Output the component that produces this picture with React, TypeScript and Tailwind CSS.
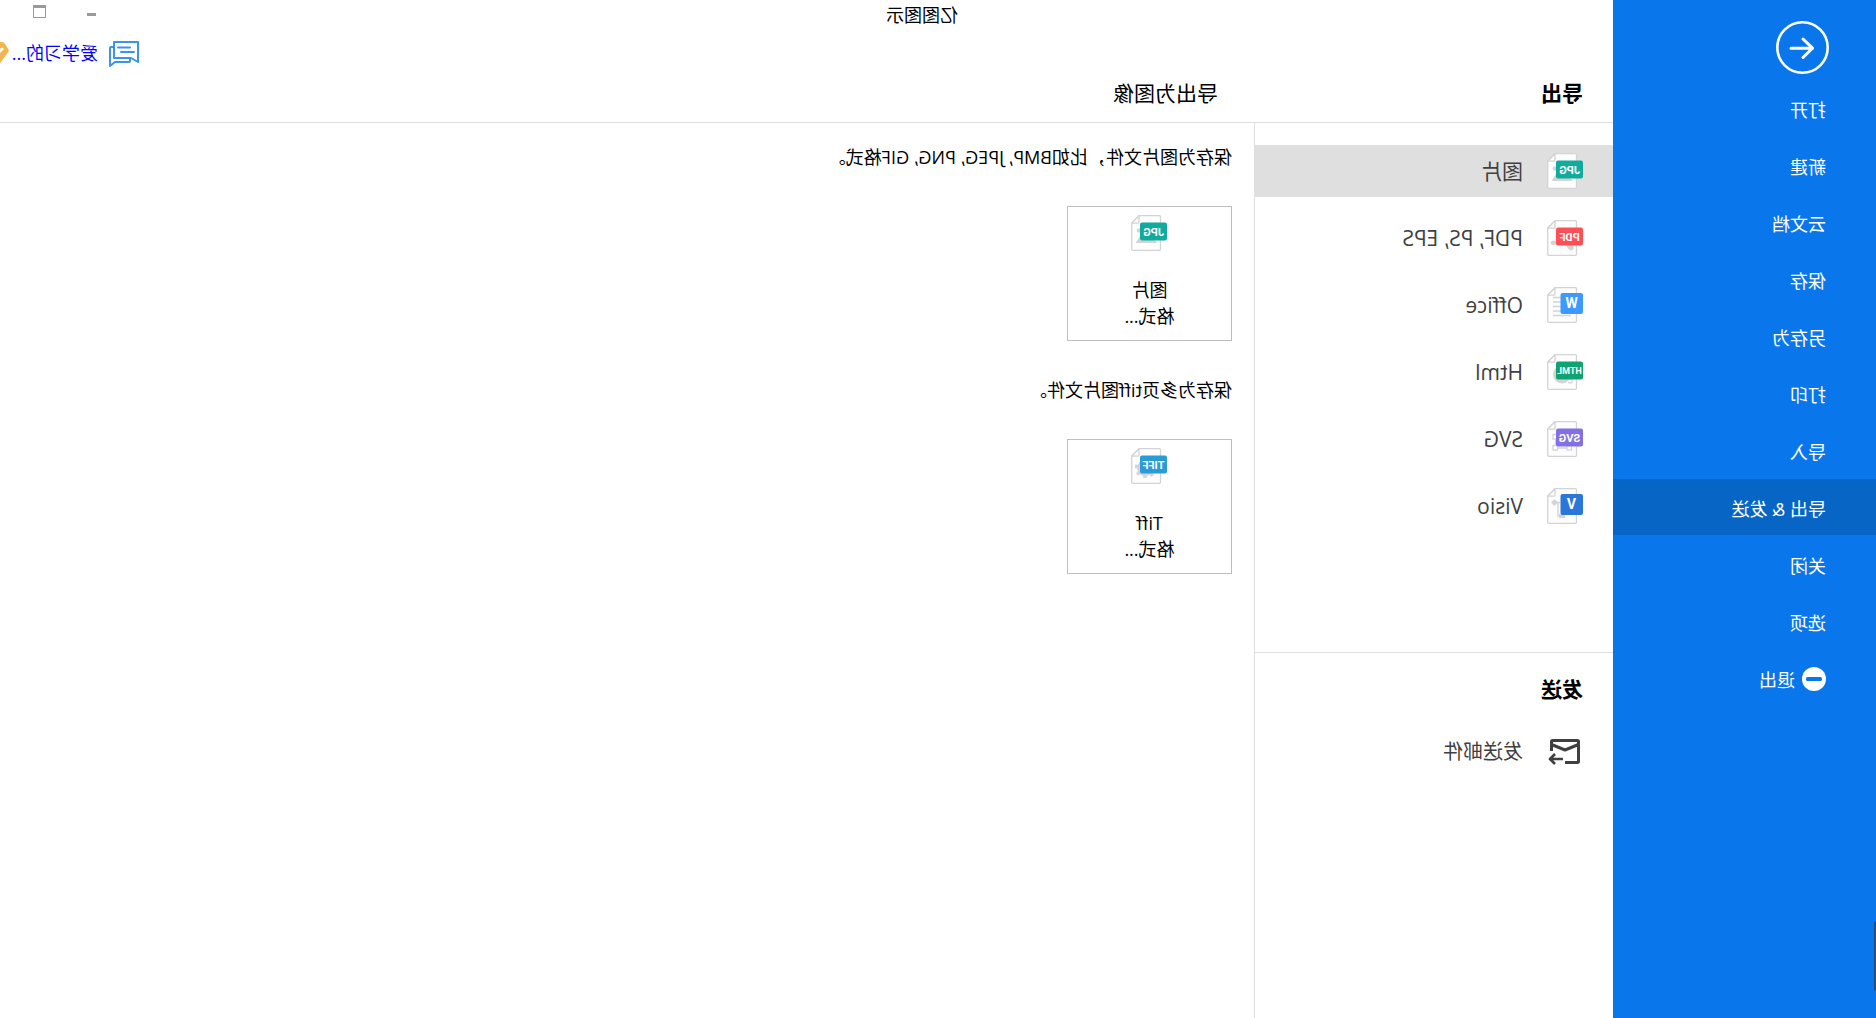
import React from 'react';
import clsx from 'clsx';

type FileKind = 'jpg' | 'pdf' | 'word' | 'html' | 'svg' | 'visio' | 'tiff';

const badges: Record<FileKind, { label: string; color: string; size: number; small?: boolean }> = {
  jpg: { label: 'JPG', color: '#11ab9e', size: 11 },
  pdf: { label: 'PDF', color: '#ff4f56', size: 11 },
  word: { label: 'W', color: '#3d99ff', size: 14, small: true },
  html: { label: 'HTML', color: '#11a274', size: 9 },
  svg: { label: 'SVG', color: '#8270e4', size: 11 },
  visio: { label: 'V', color: '#2b76d9', size: 14, small: true },
  tiff: { label: 'TIFF', color: '#2b9bd6', size: 11 },
};

const glyphs: Record<FileKind, React.ReactNode> = {
  jpg: (
    <g fill="#d4d4d4">
      <circle cx="28" cy="15.5" r="2.3" />
      <path d="M10 28l8-11 6 7 3-3 4.500 7z" />
    </g>
  ),
  pdf: (
    <g fill="#d4d4d4">
      <ellipse cx="29" cy="22.700" rx="3.300" ry="2.200" />
      <path d="M18 24l-4 5.500q-2 2-4 0-1.500-2 .5-4z" />
    </g>
  ),
  word: <path d="M12 10.500h18M12 15h18M12 19.500h18M12 24h18M12 28.500h18" stroke="#d4d4d4" strokeWidth="1.300" />,
  html: (
    <g>
      <circle cx="21" cy="20.500" r="9" fill="#d4d4d4" />
      <path d="M11 23v5q0 1.500 4 .5" fill="none" stroke="#d4d4d4" strokeWidth="1.300" />
    </g>
  ),
  svg: (
    <g fill="#fff" stroke="#d4d4d4" strokeWidth="1.300">
      <path d="M27.500 14v13h-14V14" fill="none" />
      <rect x="25.500" y="13.500" width="4.500" height="4.500" />
      <rect x="25.500" y="24.500" width="4.500" height="4.500" />
      <rect x="11.500" y="24.500" width="4.500" height="4.500" />
    </g>
  ),
  visio: (
    <g fill="#d4d4d4">
      <path d="M28.500 11l3.500 3.500-3.500 3.500-3.500-3.500z" />
      <path d="M28 14.500h-5M25 15v13h-7" fill="none" stroke="#d4d4d4" strokeWidth="1.300" />
      <rect x="18" y="26" width="6" height="4" />
    </g>
  ),
  tiff: (
    <g fill="none" stroke="#d4d4d4">
      <circle cx="22" cy="20" r="6" strokeWidth="4" />
      <path d="M22 26v4M27.500 24.500l2.500 2M28 18.500h4M16.500 25l-2 3" strokeWidth="3.500" />
    </g>
  ),
};

const FileIcon: React.FC<{ kind: FileKind }> = ({ kind }) => {
  const badge = badges[kind];
  return (
    <svg viewBox="0 0 36 36" className="h-9 w-9 shrink-0" aria-hidden="true">
      <path d="M7.500.7H28l7.300 7.500v26.100a1 1 0 0 1-1 1H7.500a1 1 0 0 1-1-1V1.700a1 1 0 0 1 1-1z" fill="#fdfdfd" stroke="#d4d4d4" strokeWidth="1.300" />
      {glyphs[kind]}
      <path d="M28 .7v6.500a1 1 0 0 0 1 1h6.300z" fill="#fdfdfd" stroke="#d4d4d4" strokeWidth="1.300" />
      {badge.small ? (
        <rect x="0" y="6" width="22.500" height="21" rx="2" fill={badge.color} />
      ) : (
        <rect x="0" y="7.500" width="27" height="18" rx="2" fill={badge.color} />
      )}
      <text
        x={badge.small ? 11.5 : 13.5}
        y={badge.small ? 21 : badge.size === 9 ? 20 : 20.5}
        textAnchor="middle"
        fill="#fff"
        fontSize={badge.size}
        fontWeight="bold"
        fontFamily='Roboto, "Liberation Sans", sans-serif'
      >
        {badge.label}
      </text>
    </svg>
  );
};

const menuItems = ['打开', '新建', '云文档', '保存', '另存为', '打印', '导入', '导出 & 发送', '关闭', '选项'];

const exportTypes: { kind: FileKind; label: string }[] = [
  { kind: 'jpg', label: '图片' },
  { kind: 'pdf', label: 'PDF, PS, EPS' },
  { kind: 'word', label: 'Office' },
  { kind: 'html', label: 'Html' },
  { kind: 'svg', label: 'SVG' },
  { kind: 'visio', label: 'Visio' },
];

const Sidebar: React.FC = () => (
  <nav className="relative flex w-[263px] shrink-0 flex-col bg-[#0977eb] text-lg text-white">
    <button aria-label="返回" className="mt-[21px] mb-[6px] ml-[47px] h-[53px] w-[53px]">
      <svg viewBox="0 0 53 53" fill="none" stroke="#fff" strokeLinecap="round" strokeLinejoin="round">
        <circle cx="26.500" cy="26.500" r="25.200" strokeWidth="2.600" />
        <path d="M38 27.200H16.500M26 18l-9.500 9.200L26 36.500" strokeWidth="3" />
      </svg>
    </button>
    <div className="flex flex-col gap-px">
      {menuItems.map((item) => (
        <button
          key={item}
          className={clsx('h-14 pt-1 pl-[50px] text-left', item === '导出 & 发送' && 'bg-[#0765c5]')}
        >
          {item}
        </button>
      ))}
      <button className="flex h-14 items-center gap-[7px] pt-[2px] pl-[50px]">
        <svg viewBox="0 0 24 24" className="h-6 w-6" aria-hidden="true">
          <circle cx="12" cy="12" r="12" fill="#fff" />
          <rect x="4" y="10" width="16" height="4" rx="1.500" fill="#0977eb" />
        </svg>
        <span className="pt-[2px]">退出</span>
      </button>
    </div>
    {/* drawer handle on the window edge */}
    <div className="absolute bottom-[27px] left-0 h-[70px] w-[2px] rounded-r-sm bg-[#2b4f74]" />
  </nav>
);

const TopBar: React.FC = () => (
  <header className="border-b border-[#dfdfdf]">
    <div className="relative flex h-8 items-center justify-center pr-[263px] pb-[2px]">
      <h1 className="text-lg leading-6">亿图图示</h1>
      <div className="absolute top-0 right-[46px] flex h-[22px]">
        <button aria-label="最小化" className="flex w-[52px] items-center justify-center pt-[6px]">
          <span className="h-[3px] w-[9px] bg-[#999]" />
        </button>
        <button aria-label="最大化" className="flex w-[52px] items-center justify-center">
          <span className="h-[13px] w-[13px] border border-t-[3px] border-[#999]" />
        </button>
      </div>
    </div>
    <div className="flex h-11 items-center justify-end pr-[17px]">
      <button aria-label="消息" className="mr-[11px]">
        <svg viewBox="0 0 30 26" className="h-[26px] w-[30px]" fill="none" stroke="#3b93ec" strokeWidth="2" strokeLinejoin="round" strokeLinecap="round">
          <path d="M1 1h24v16H8l-7 4z" />
          <path d="M25 6h3q1 0 1 1v18l-5-4H10q-1 0-1-1v-3M9 6.500h12M5 11h13" />
        </svg>
      </button>
      <a href="#account" className="w-[85px] pb-[2px] text-lg leading-6 whitespace-nowrap text-[#0000ff]">爱学习的...</a>
      <svg viewBox="0 0 24 24" className="ml-1 h-6 w-6" aria-hidden="true">
        <path d="M7 0h10q2 0 3 2l3 4.500q1.500 2 0 4L14.500 22q-2.500 2.500-5 0L1 10.500q-1.500-2 0-4L4 2q1-2 3-2z" fill="#f5b54d" />
        <path d="M7 7l5 5 5-5" fill="none" stroke="#fff" strokeWidth="3" strokeLinecap="round" />
      </svg>
    </div>
    <div className="mb-[10px] flex h-9 items-center text-[21px]">
      <h2 className="w-[395px] pl-[30px] font-bold">导出</h2>
      <h2>导出为图像</h2>
    </div>
  </header>
);

const ExportList: React.FC = () => (
  <aside className="w-[359px] shrink-0 border-r border-[#dfdfdf] text-[#404040]">
    <div className="flex flex-col gap-[15px] border-b border-[#dfdfdf] pt-[22px] pb-[120px] text-[21px]">
      {exportTypes.map(({ kind, label }) => (
        <button
          key={kind}
          className={clsx('flex h-[52px] items-center gap-6 pl-[30px]', kind === 'jpg' && 'bg-[#dfdfdf]')}
        >
          <FileIcon kind={kind} />
          <span className="pt-[2px]">{label}</span>
        </button>
      ))}
    </div>
    <h2 className="mt-[18px] pl-[30px] text-[21px] leading-9 font-bold text-black">发送</h2>
    <button className="mt-[18px] flex h-[52px] w-full items-center gap-6 pl-[30px] text-xl">
      <svg viewBox="0 0 36 36" className="h-9 w-9" fill="none" stroke="#404040" strokeWidth="3" strokeLinejoin="round" aria-hidden="true">
        <path d="M18 29.500H5.500a1 1 0 0 1-1-1V8.500a1 1 0 0 1 1-1h25a1 1 0 0 1 1 1V18" />
        <path d="M4.500 11.500L18 17l13.500-5.500" />
        <path d="M20 26h12M28 21l5 5-5 5" strokeWidth="2.700" />
      </svg>
      <span className="pt-[2px]">发送邮件</span>
    </button>
  </aside>
);

interface FormatCardProps {
  kind: FileKind;
  title: string;
}

const FormatCard: React.FC<FormatCardProps> = ({ kind, title }) => (
  <button className="flex h-[135px] w-[165px] flex-col items-center border border-[#bdbdbd] pt-2 leading-[26px]">
    <FileIcon kind={kind} />
    <span className="mt-[26px]">{title}</span>
    <span>格式...</span>
  </button>
);

export default function App() {
  // the whole window is shown mirrored
  return (
    <div className="flex min-h-screen -scale-x-100 overflow-hidden bg-white font-['Open_Sans','Noto_Sans_CJK_SC',sans-serif] text-black">
      <Sidebar />
      {/* the window runs 32px past the visible edge */}
      <div className="-mr-8 flex flex-1 flex-col">
        <TopBar />
        <div className="flex flex-1">
          <ExportList />
          <main className="flex flex-col items-start gap-[37px] pt-[22px] pl-[22px] text-lg">
            <p className="leading-6">保存为图片文件，比如BMP, JPEG, PNG, GIF格式。</p>
            <FormatCard kind="jpg" title="图片" />
            <p className="leading-6">保存为多页tiff图片文件。</p>
            <FormatCard kind="tiff" title="Tiff" />
          </main>
        </div>
      </div>
    </div>
  );
}
